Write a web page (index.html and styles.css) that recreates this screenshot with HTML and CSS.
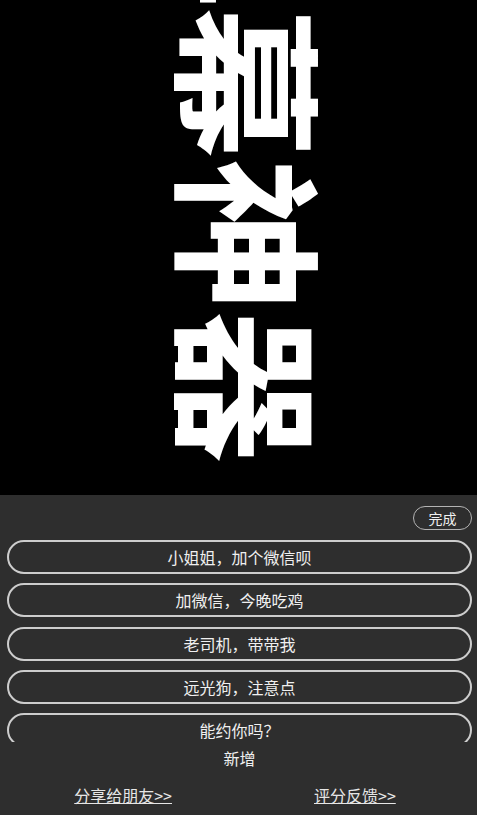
FILE: index.html
```html
<!DOCTYPE html>
<html lang="zh-CN">
<head>
    <meta charset="UTF-8">
    <title>弹幕神器</title>
    <link rel="stylesheet" href="styles.css">
</head>
<body>
<div class="stage">
    <span class="stage-text">弹幕神器</span>
</div>

<div class="panel">
    <div class="d-flex justify-content-end">
        <button class="done-btn">完成</button>
    </div>

    <div class="phrase-list">
        <div class="phrase">小姐姐，加个微信呗</div>
        <div class="phrase">加微信，今晚吃鸡</div>
        <div class="phrase">老司机，带带我</div>
        <div class="phrase">远光狗，注意点</div>
        <div class="phrase">能约你吗？</div>
    </div>

    <div class="add-btn">新增</div>

    <div class="d-flex footer">
        <a class="footer-link" href="#">分享给朋友&gt;&gt;</a>
        <a class="footer-link" href="#">评分反馈&gt;&gt;</a>
    </div>
</div>
</body>
</html>
```

FILE: styles.css
```css
body {
    margin: 0;
    background: #2e2e2e;
    font-family: "Noto Sans CJK SC", "Noto Sans", sans-serif;
    color: #f0f0f0;
    user-select: none;
}

.d-flex {
    display: flex;
}

.justify-content-end {
    justify-content: flex-end;
}

.stage {
    height: 495px;
    background: #000;
    overflow: hidden;
    display: flex;
    justify-content: center;
}

.stage-text {
    writing-mode: vertical-rl;
    text-orientation: sideways;
    font-size: 152px;
    font-weight: 700;
    line-height: 1;
    color: #fff;
    margin-top: -145px;
    margin-left: 30px;
    white-space: nowrap;
}

.panel {
    padding: 11px 5px 0 7px;
}

.done-btn {
    width: 59px;
    height: 24px;
    padding: 0;
    border: 1px solid #b4b4b4;
    border-radius: 12px;
    background: transparent;
    color: #f0f0f0;
    font-family: inherit;
    font-size: 14px;
    line-height: 22px;
}

.phrase-list {
    height: 202px;
    margin-top: 10px;
    overflow: hidden;
}

.phrase {
    height: 30px;
    margin-bottom: 9.3px;
    border: 2px solid #cdcdcd;
    border-radius: 17px;
    text-align: center;
    font-size: 16px;
    line-height: 30px;
}

.add-btn {
    text-align: center;
    font-size: 16px;
    line-height: 24px;
    margin-top: 4px;
}

.footer {
    justify-content: center;
    gap: 142px;
    padding-right: 9px;
    margin-top: 13px;
}

.footer-link {
    color: #e6e6e6;
    font-size: 16px;
    line-height: 24px;
    text-decoration: underline;
}
```
